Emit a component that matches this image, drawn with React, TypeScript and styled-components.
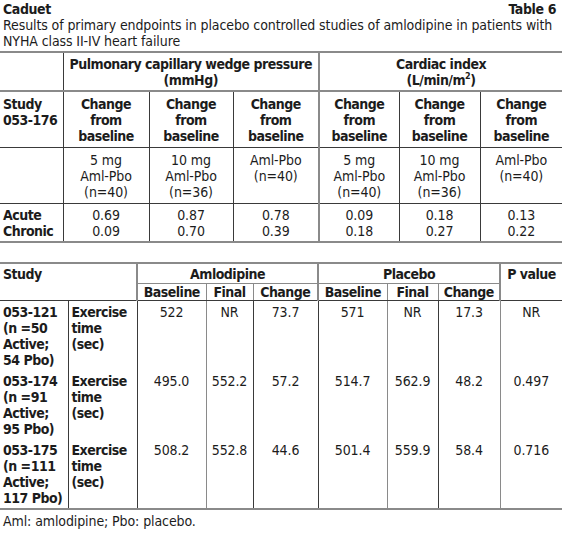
import React from 'react';
import styled, { createGlobalStyle } from 'styled-components';

const GlobalStyle = createGlobalStyle`
  html, body {
    margin: 0;
    padding: 0;
    background: #ffffff;
  }
  body {
    font-family: "DejaVu Sans Condensed", "Liberation Sans", sans-serif;
    color: #1c1c1c;
    font-size: 14px;
    line-height: 16px;
    letter-spacing: -0.1px;
  }
`;

const Page = styled.div`
  width: 562px;
  padding-top: 1px;
`;

const TitleRow = styled.div`
  display: flex;
  justify-content: space-between;
  padding: 0 6px 0 3px;
  font-weight: bold;
  letter-spacing: -0.4px;
`;

const Caption = styled.div`
  padding: 0 3px;
  margin-bottom: 2px;
`;

const Table = styled.table<{ $gap: number }>`
  width: 562px;
  border-collapse: collapse;
  table-layout: fixed;
  border-top: 2px solid #8a8a8a;
  border-bottom: 2px solid #8a8a8a;
  margin-bottom: ${(p) => p.$gap}px;
`;

const Col = styled.col<{ $w: number }>`
  width: ${(p) => p.$w}px;
`;

type Line = 'dark' | 'gray' | 'thick' | undefined;

type CellProps = {
  $bold?: boolean;
  $left?: boolean;
  $right?: Line;
  $bottom?: Line;
  $pad?: string;
};

const lineFor = (v?: string) =>
  v === 'dark' ? '1px solid #3a3a3a' : v === 'gray' ? '1px solid #8a8a8a' : v === 'thick' ? '2px solid #8a8a8a' : 'none';

const Cell = styled.td<CellProps>`
  vertical-align: top;
  padding: ${(p) => p.$pad || '3px 2px'};
  font-weight: ${(p) => (p.$bold ? 'bold' : 'normal')};
  letter-spacing: ${(p) => (p.$bold ? '-0.5px' : '-0.1px')};
  text-align: ${(p) => (p.$left ? 'left' : 'center')};
  border-right: ${(p) => lineFor(p.$right)};
  border-bottom: ${(p) => lineFor(p.$bottom)};
  white-space: nowrap;
`;

const Sup = styled.sup`
  font-size: 9px;
  line-height: 0;
`;

const Footnote = styled.div`
  padding: 3px 3px 0;
`;

const change = (
  <>
    Change
    <br />
    from
    <br />
    baseline
  </>
);

const doses = [
  <>5 mg<br />Aml-Pbo<br />(n=40)</>,
  <>10 mg<br />Aml-Pbo<br />(n=36)</>,
  <>Aml-Pbo<br />(n=40)</>,
];

const firstRows = [
  { acute: '0.69', chronic: '0.09' },
  { acute: '0.87', chronic: '0.70' },
  { acute: '0.78', chronic: '0.39' },
  { acute: '0.09', chronic: '0.18' },
  { acute: '0.18', chronic: '0.27' },
  { acute: '0.13', chronic: '0.22' },
];

const colRight: Line[] = ['dark', 'dark', 'thick', 'dark', 'dark', undefined];
const firstCols = [63, 86, 84, 86, 80, 81, 82];

const studies = [
  { id: '053-121', n: '(n =50', pbo: '54 Pbo)', vals: ['522', 'NR', '73.7', '571', 'NR', '17.3', 'NR'] },
  { id: '053-174', n: '(n =91', pbo: '95 Pbo)', vals: ['495.0', '552.2', '57.2', '514.7', '562.9', '48.2', '0.497'] },
  { id: '053-175', n: '(n =111', pbo: '117 Pbo)', vals: ['508.2', '552.8', '44.6', '501.4', '559.9', '58.4', '0.716'] },
];

const bodyRight: Line[] = ['gray', 'dark', 'dark', 'gray', 'dark', 'gray', undefined];
const secondCols = [68, 69, 69, 47, 65, 69, 51, 62, 62];
const subHeads: Array<[string, Line]> = [
  ['Baseline', 'gray'],
  ['Final', 'gray'],
  ['Change', 'thick'],
  ['Baseline', 'gray'],
  ['Final', 'gray'],
  ['Change', 'thick'],
];

export default function App() {
  return (
    <Page>
      <GlobalStyle />
      <TitleRow>
        <span>Caduet</span>
        <span>Table 6</span>
      </TitleRow>
      <Caption>
        Results of primary endpoints in placebo controlled studies of amlodipine in patients with
        <br />
        NYHA class II-IV heart failure
      </Caption>

      <Table $gap={19}>
        <colgroup>
          {firstCols.map((w, i) => (
            <Col key={i} $w={w} />
          ))}
        </colgroup>
        <tbody>
          <tr>
            <Cell $right="dark" $bottom="thick" />
            <Cell colSpan={3} $bold $right="thick" $bottom="thick" $pad="3px 2px 2px">
              Pulmonary capillary wedge pressure
              <br />
              (mmHg)
            </Cell>
            <Cell colSpan={3} $bold $bottom="thick" $pad="3px 2px 2px">
              Cardiac index
              <br />
              (L/min/m<Sup>2</Sup>)
            </Cell>
          </tr>
          <tr>
            <Cell $left $bold $right="dark" $bottom="dark" $pad="4px 3px 3px">
              Study
              <br />
              053-176
            </Cell>
            {colRight.map((r, i) => (
              <Cell key={i} $bold $right={r} $bottom="dark" $pad="4px 2px 3px">
                {change}
              </Cell>
            ))}
          </tr>
          <tr>
            <Cell $right="dark" $bottom="dark" />
            {colRight.map((r, i) => (
              <Cell key={i} $right={r} $bottom="dark" $pad="4px 2px 3px">
                {doses[i % 3]}
              </Cell>
            ))}
          </tr>
          <tr>
            <Cell $left $bold $right="dark" $pad="3px 3px 2px">
              Acute
              <br />
              Chronic
            </Cell>
            {firstRows.map((v, i) => (
              <Cell key={i} $right={colRight[i]} $pad="3px 2px 2px">
                {v.acute}
                <br />
                {v.chronic}
              </Cell>
            ))}
          </tr>
        </tbody>
      </Table>

      <Table $gap={0}>
        <colgroup>
          {secondCols.map((w, i) => (
            <Col key={i} $w={w} />
          ))}
        </colgroup>
        <tbody>
          <tr>
            <Cell colSpan={2} rowSpan={2} $left $bold $right="thick" $bottom="dark" $pad="2px 3px 1px">
              Study
            </Cell>
            <Cell colSpan={3} $bold $right="thick" $bottom="gray" $pad="2px 2px 1px">
              Amlodipine
            </Cell>
            <Cell colSpan={3} $bold $right="thick" $bottom="gray" $pad="2px 2px 1px">
              Placebo
            </Cell>
            <Cell rowSpan={2} $bold $bottom="dark" $pad="2px 2px 1px">
              P value
            </Cell>
          </tr>
          <tr>
            {subHeads.map(([t, r], i) => (
              <Cell key={i} $bold $right={r} $bottom="dark" $pad="0 1px">
                {t}
              </Cell>
            ))}
          </tr>
          {studies.map((s) => (
            <tr key={s.id}>
              <Cell $left $bold $right="dark" $pad="3px 3px 2px">
                {s.id}
                <br />
                {s.n}
                <br />
                Active;
                <br />
                {s.pbo}
              </Cell>
              <Cell $left $bold $right="dark" $pad="3px 3px 2px">
                Exercise
                <br />
                time
                <br />
                (sec)
              </Cell>
              {s.vals.map((v, i) => (
                <Cell key={i} $right={bodyRight[i]} $pad="3px 2px 2px">
                  {v}
                </Cell>
              ))}
            </tr>
          ))}
        </tbody>
      </Table>

      <Footnote>Aml: amlodipine; Pbo: placebo.</Footnote>
    </Page>
  );
}
